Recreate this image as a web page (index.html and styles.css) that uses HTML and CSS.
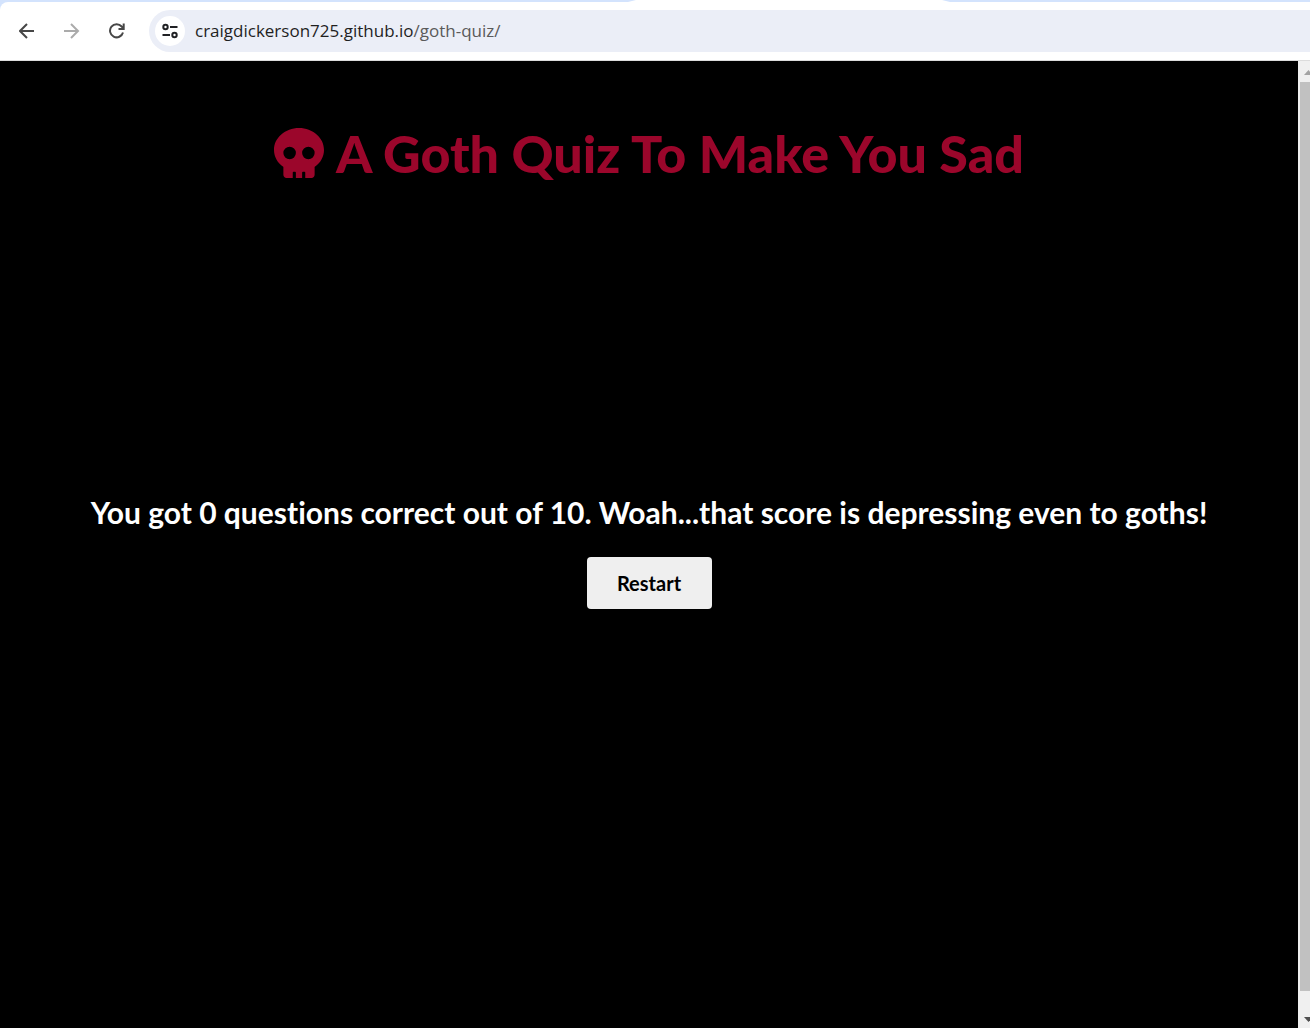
FILE: index.html
```html
<!DOCTYPE html>
<html lang="en">
<head>
<meta charset="utf-8">
<title>A Goth Quiz To Make You Sad</title>
<link rel="stylesheet" href="styles.css">
</head>
<body>
<div class="window">
  <div class="tabs"><span class="tab"></span></div>
  <nav class="toolbar" aria-label="Browser">
    <button class="nav-button" type="button" aria-label="Back">
      <svg viewBox="0 0 16 16" width="16" height="16"><path d="M15 8H1.500M8 1L1 8l7 7"/></svg>
    </button>
    <button class="nav-button" type="button" aria-label="Forward" disabled>
      <svg viewBox="0 0 16 16" width="16" height="16"><path d="M0 8H13.500M7 1l7 7-7 7"/></svg>
    </button>
    <button class="nav-button" type="button" aria-label="Reload">
      <svg viewBox="0 0 16 16" width="16" height="16"><path d="M14 9.500A6.600 6.600 0 1 1 12.700 3.500L14.500 5.500M14.700.5V6H9.500"/></svg>
    </button>
    <div class="address">
      <button class="site-info" type="button" aria-label="Site information">
        <svg viewBox="0 0 16 16" width="16" height="16"><circle cx="3.500" cy="4" r="2.200"/><circle cx="12.500" cy="12" r="2.200"/><path d="M8 4h7.500M.5 12H8"/></svg>
      </button>
      <a class="url" href="#">craigdickerson725.github.io<span class="path">/goth-quiz/</span></a>
    </div>
  </nav>
  <div class="viewport">
    <main class="page">
      <h1 class="title">
        <svg class="skull" viewBox="0 0 512 512" aria-hidden="true"><path fill-rule="evenodd" d="M256 0C114.600 0 0 100.300 0 224c0 70.100 36.900 132.600 94.500 173.700 2 1.500 1.500 5 1.500 10v72c0 17.700 14.300 32 32 32h64v-56c0-4.400 3.600-8 8-8h16c4.400 0 8 3.600 8 8v56h64v-56c0-4.400 3.600-8 8-8h16c4.400 0 8 3.600 8 8v56h64c17.700 0 32-14.300 32-32v-72c0-5-.5-8.500 1.500-10C475.100 356.600 512 294.100 512 224 512 100.300 397.400 0 256 0zm-96 320a64 64 0 1 1 0-128 64 64 0 0 1 0 128zm192 0a64 64 0 1 1 0-128 64 64 0 0 1 0 128z"/></svg>
        A Goth Quiz To Make You Sad
      </h1>
      <section class="result">
        <h2 class="score">You got 0 questions correct out of 10. Woah...that score is depressing even to goths!</h2>
        <button class="restart" type="button">Restart</button>
      </section>
    </main>
    <div class="scrollbar" aria-hidden="true">
      <svg class="arrow up" viewBox="0 0 9 5"><path d="M0 5L4.500 0 9 5z"/></svg>
      <div class="thumb"></div>
      <svg class="arrow down" viewBox="0 0 9 5"><path d="M0 0h9L4.500 5z"/></svg>
    </div>
  </div>
</div>
</body>
</html>
```
FILE: styles.css
```css
* { box-sizing: border-box; }

body {
  margin: 0;
  background: #000;
}

.window {
  display: flex;
  flex-direction: column;
  min-height: 100vh;
  background: #d3e3fd;
  overflow: hidden;
}

.tabs {
  display: flex;
  height: 2px;
  padding-left: 628px;
}

.tab {
  width: 322px;
  background: #fff;
  clip-path: polygon(8px 0, 314px 0, 100% 100%, 0 100%);
}

.toolbar {
  display: flex;
  align-items: center;
  height: 59px;
  padding: 0 0 1px 12px;
  background: #fff;
  border-bottom: 1px solid #dcdcdc;
  border-top-left-radius: 8px;
}

.nav-button {
  display: grid;
  place-items: center;
  width: 30px;
  height: 30px;
  margin-right: 15px;
  padding: 0;
  border: 0;
  background: none;
  color: #474747;
}

.nav-button:disabled { color: #ababab; }

.nav-button svg,
.site-info svg {
  fill: none;
  stroke: currentColor;
  stroke-width: 2;
}

.address {
  flex: 1;
  display: flex;
  align-items: center;
  gap: 10px;
  height: 42px;
  margin-left: 2px;
  padding-left: 6px;
  background: #ebeef7;
  border-radius: 21px 0 0 21px;
}

.site-info {
  display: grid;
  place-items: center;
  width: 30px;
  height: 30px;
  padding: 0;
  border: 0;
  border-radius: 50%;
  background: #fff;
  color: #202124;
}

.url {
  font: 17px/24px "Open Sans", "Noto Sans", sans-serif;
  color: #1f1f1f;
  text-decoration: none;
}

.path { color: #5a5a5a; }

.viewport {
  flex: 1;
  display: flex;
}

.page {
  flex: 1;
  min-width: 0;
  background: #000;
  font-family: Lato, "Open Sans", sans-serif;
  font-variant-ligatures: none;
  text-align: center;
}

.title {
  display: flex;
  justify-content: center;
  align-items: center;
  gap: 12px;
  margin: 0;
  padding-top: 60px;
  font-size: 52px;
  line-height: 64px;
  font-weight: 900;
  color: #9b062b;
}

.skull {
  width: 50px;
  height: 50px;
  fill: currentColor;
}

.result { padding: 306px 16px 32px; }

.score {
  margin: 0 0 24px;
  font-size: 30px;
  line-height: 42px;
  font-weight: 700;
  color: #fff;
}

.restart {
  min-width: 125px;
  height: 52px;
  border: 0;
  border-radius: 4px;
  background: #efefef;
  color: #000;
  font: 700 20px/24px Lato, "Open Sans", sans-serif;
}

.scrollbar {
  display: flex;
  flex-direction: column;
  width: 12px;
  padding: 9px 0 6px;
  background: #f0f0f0;
  overflow: hidden;
}

.arrow {
  flex: none;
  width: 9px;
  height: 5px;
  margin-left: 6px;
}

.up { fill: #a3a3a3; }
.down { fill: #505050; }

.thumb {
  flex: 1;
  margin: 7px 0 26px 2px;
  background: #c1c1c1;
}
```
